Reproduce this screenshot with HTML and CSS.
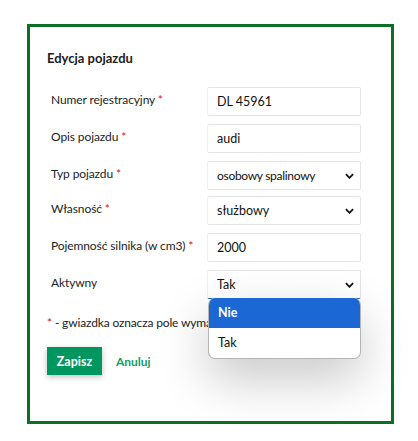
FILE: index.html
```html
<!DOCTYPE html>
<html lang="pl">
<head>
<meta charset="utf-8">
<link rel="stylesheet" href="styles.css">
</head>
<body>
<div class="panel">
  <h2 class="title">Edycja pojazdu</h2>
  <form class="form">
    <div class="row r1">
      <label class="label">Numer rejestracyjny <span class="req">*</span></label>
      <div class="field">DL 45961</div>
    </div>
    <div class="row r2">
      <label class="label">Opis pojazdu <span class="req">*</span></label>
      <div class="field">audi</div>
    </div>
    <div class="row r3">
      <label class="label">Typ pojazdu <span class="req">*</span></label>
      <div class="field select"><span class="sm">osobowy spalinowy</span><svg class="chev" viewBox="0 0 10 6"><path d="M1 1l4 4 4-4" fill="none" stroke="#111" stroke-width="2"/></svg></div>
    </div>
    <div class="row r4">
      <label class="label">Własność <span class="req">*</span></label>
      <div class="field select">służbowy<svg class="chev" viewBox="0 0 10 6"><path d="M1 1l4 4 4-4" fill="none" stroke="#111" stroke-width="2"/></svg></div>
    </div>
    <div class="row r5">
      <label class="label">Pojemność silnika (w cm3) <span class="req">*</span></label>
      <div class="field">2000</div>
    </div>
    <div class="row r6">
      <label class="label">Aktywny</label>
      <div class="field select focus">Tak<svg class="chev" viewBox="0 0 10 6"><path d="M1 1l4 4 4-4" fill="none" stroke="#111" stroke-width="2"/></svg>
        <ul class="menu">
          <li class="opt active">Nie</li>
          <li class="opt">Tak</li>
        </ul>
      </div>
    </div>
  </form>
  <p class="note"><span class="req">*</span> - gwiazdka oznacza pole wymagane</p>
  <div class="actions">
    <button class="btn" type="button">Zapisz</button>
    <a class="cancel">Anuluj</a>
  </div>
</div>
</body>
</html>
```
FILE: styles.css
```css
* { box-sizing: border-box; }
html, body { margin: 0; padding: 0; background: #fff; }
body {
  font-family: Lato, "Open Sans", sans-serif;
  color: #222;
  padding: 24px 0 0 27px;
}
.panel {
  width: 367px;
  height: 400px;
  border: 3px solid #0d6e24;
  padding: 20px 0 0 17px;
}
.title {
  margin: 0;
  font-size: 13px;
  font-weight: 700;
  line-height: 22px;
  color: #1c1c1c;
}
.form {
  margin-top: 18px;
  display: flex;
  flex-direction: column;
  gap: 8px;
}
.r4 { margin-top: -2px; }
.row {
  display: flex;
  align-items: center;
  padding-left: 4px;
}
.label {
  width: 156px;
  font-size: 12px;
  letter-spacing: -0.1px;
  color: #222;
  margin-top: -4px;
}
.req { color: #e01010; }
.field {
  position: relative;
  width: 154px;
  height: 29px;
  border: 1px solid #e4e4e4;
  border-left-color: #f0f0f0;
  border-radius: 2px;
  padding-left: 9px;
  font-size: 12.5px;
  display: flex;
  align-items: center;
  color: #111;
}
.sm { font-size: 12px; letter-spacing: -0.3px; }
.select { padding-right: 10px; justify-content: space-between; }
.focus { border-bottom: 1px solid #2d6ab2; }
.chev { width: 9px; height: 6px; margin-right: -4px; }
.menu {
  position: absolute;
  left: 0;
  top: 100%;
  width: 153px;
  margin: 0;
  padding: 0;
  list-style: none;
  background: #fff;
  border-radius: 7px;
  border: 1px solid #b5b5b5;
  border-top: none;
  overflow: hidden;
  box-shadow: 0 20px 50px rgba(0,0,0,0.22);
  z-index: 2;
}
.opt {
  height: 30px;
  line-height: 30px;
  padding-left: 9px;
  font-size: 12.5px;
  color: #111;
}
.opt.active { background: #1b67d3; color: #fff; font-weight: 700; }
.note {
  margin: 16px 0 0;
  font-size: 12px;
  letter-spacing: -0.15px;
  color: #222;
}
.actions {
  margin-top: 17px;
  display: flex;
  align-items: center;
  gap: 14px;
}
.btn {
  width: 55px;
  height: 28px;
  border: none;
  background: #009660;
  color: #fff;
  font-family: inherit;
  font-size: 12.5px;
  font-weight: 700;
  box-shadow: 0 2px 6px rgba(0,0,0,0.25);
  padding: 0;
}
.cancel {
  color: #139c68;
  font-size: 12px;
  font-weight: 700;
}
```
